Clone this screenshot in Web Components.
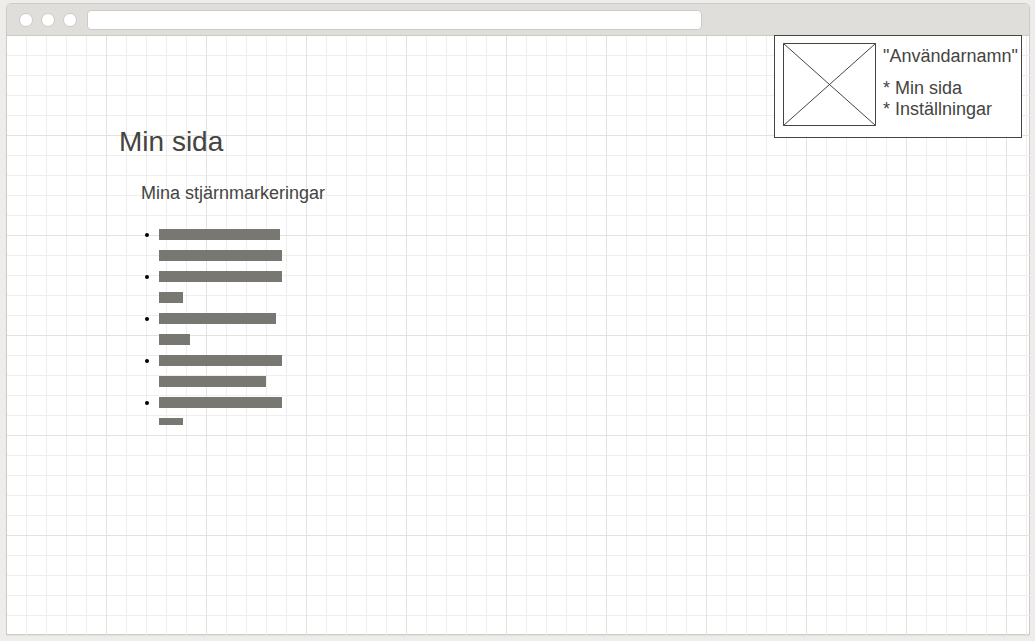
<!DOCTYPE html>
<html lang="sv">
<head>
<meta charset="utf-8">
<title>Min sida</title>
<style>
  body { margin: 0; background: #eeedeb; color: #444441; font-family: "Liberation Sans", Arial, sans-serif; font-size: 18px; line-height: 21px; }
</style>
</head>
<body>
<browser-frame>
  <page-intro>
    <span slot="title">Min sida</span>
    <span slot="subtitle">Mina stjärnmarkeringar</span>
    <redacted-list slot="content" lines="121,123;123,24;117,31;123,107;123,24"></redacted-list>
  </page-intro>
  <user-card>
    <span slot="name">"Användarnamn"</span>
    <card-link href="#min-sida">Min sida</card-link>
    <card-link href="#installningar">Inställningar</card-link>
  </user-card>
</browser-frame>
<script>
  class Component extends HTMLElement {
    constructor() {
      super();
      this.attachShadow({ mode: "open" }).innerHTML = this.constructor.markup;
    }
  }

  customElements.define("browser-frame", class extends Component {
    static markup = `
      <style>
        :host { display: flex; box-sizing: border-box; min-height: 100vh; padding: 3px 5px 6px 6px; }
        .window { flex: 1; min-width: 0; display: flex; flex-direction: column; border: 1px solid #cecbc6; border-radius: 5px 5px 0 0; box-shadow: 0 1px 1px #e2e0dd; background: #fff; }
        header { display: flex; align-items: center; padding: 6px 0 5px; background: #dfdeda; border-bottom: 1px solid #cecbc6; border-radius: 4px 4px 0 0; }
        .dots { display: flex; gap: 8px; padding: 0 10px 0 12px; }
        .dot { box-sizing: border-box; flex: none; width: 14px; height: 14px; border: 1px solid #cecbc6; border-radius: 50%; background: #fff; }
        .address { box-sizing: content-box; flex: none; width: 60%; height: 18px; margin: 0; padding: 0; border: 1px solid #cecbc6; border-radius: 4px; background: #fff; outline: none; }
        main {
          flex: 1; display: flex; align-items: flex-start; justify-content: space-between;
          margin: 0 -1px -1px 0; padding-right: 8px;
          background-image:
            linear-gradient(to right, transparent 99px, #e2e2df 99px),
            linear-gradient(to bottom, transparent 99px, #e2e2df 99px),
            linear-gradient(to right, transparent 19px, #eee 19px),
            linear-gradient(to bottom, transparent 19px, #eee 19px);
          background-size: 100px 100px, 100px 100px, 20px 20px, 20px 20px;
        }
      </style>
      <div class="window">
        <header>
          <div class="dots"><span class="dot"></span><span class="dot"></span><span class="dot"></span></div>
          <input class="address" type="text" aria-label="Adress">
        </header>
        <main><slot></slot></main>
      </div>`;
  });

  customElements.define("page-intro", class extends Component {
    static markup = `
      <style>
        :host { display: block; padding: 90px 0 0 112px; }
        h1, h2 { margin: 0; font-weight: 400; }
        h1 { font-size: 28px; line-height: 32px; }
        h2 { margin: 25px 0 25px 22px; font-size: 18px; line-height: 21px; }
        section { margin-left: 22px; }
      </style>
      <h1><slot name="title"></slot></h1>
      <h2><slot name="subtitle"></slot></h2>
      <section><slot name="content"></slot></section>`;
  });

  customElements.define("redacted-list", class extends Component {
    static markup = `
      <style>
        :host { display: block; }
        ul { display: grid; gap: 10px; margin: 0; padding: 0; list-style: none; }
        li { display: grid; grid-template-columns: 18px auto; }
        li::before { content: ""; width: 4px; height: 4px; margin: 4px; border-radius: 50%; background: #000; }
        .lines { display: grid; gap: 10px; justify-items: start; }
        .bar { height: 11px; background: #787771; }
        li:last-child .bar:last-child { height: 7px; }
      </style>
      <ul></ul>`;
    connectedCallback() {
      this.shadowRoot.querySelector("ul").innerHTML = this.getAttribute("lines").split(";").map(item =>
        `<li><div class="lines">${item.split(",").map(w => `<div class="bar" style="width:${w}px"></div>`).join("")}</div></li>`
      ).join("");
    }
  });

  customElements.define("user-card", class extends Component {
    static markup = `
      <style>
        :host { display: flex; box-sizing: border-box; flex: none; min-width: 248px; align-items: flex-start; gap: 7px; margin-top: -1px; padding: 7px 0 11px 8px; border: 1px solid #444441; background: #fff; }
        svg { display: block; flex: none; }
        .text { padding-top: 3px; }
        .name { margin-bottom: 11px; white-space: nowrap; }
      </style>
      <svg width="93" height="83" viewBox="0 0 93 83" fill="none" stroke="#444441" role="img" aria-label="Profilbild">
        <path d="M.5.5h92v82H.5zM.5.5l92 82M92.5.5l-92 82"/>
      </svg>
      <div class="text">
        <div class="name"><slot name="name"></slot></div>
        <nav><slot></slot></nav>
      </div>`;
  });

  customElements.define("card-link", class extends Component {
    static markup = `
      <style>
        :host { display: block; white-space: nowrap; }
        a { color: inherit; text-decoration: none; }
      </style>
      <a>* <slot></slot></a>`;
    connectedCallback() {
      this.shadowRoot.querySelector("a").href = this.getAttribute("href");
    }
  });
</script>
</body>
</html>
